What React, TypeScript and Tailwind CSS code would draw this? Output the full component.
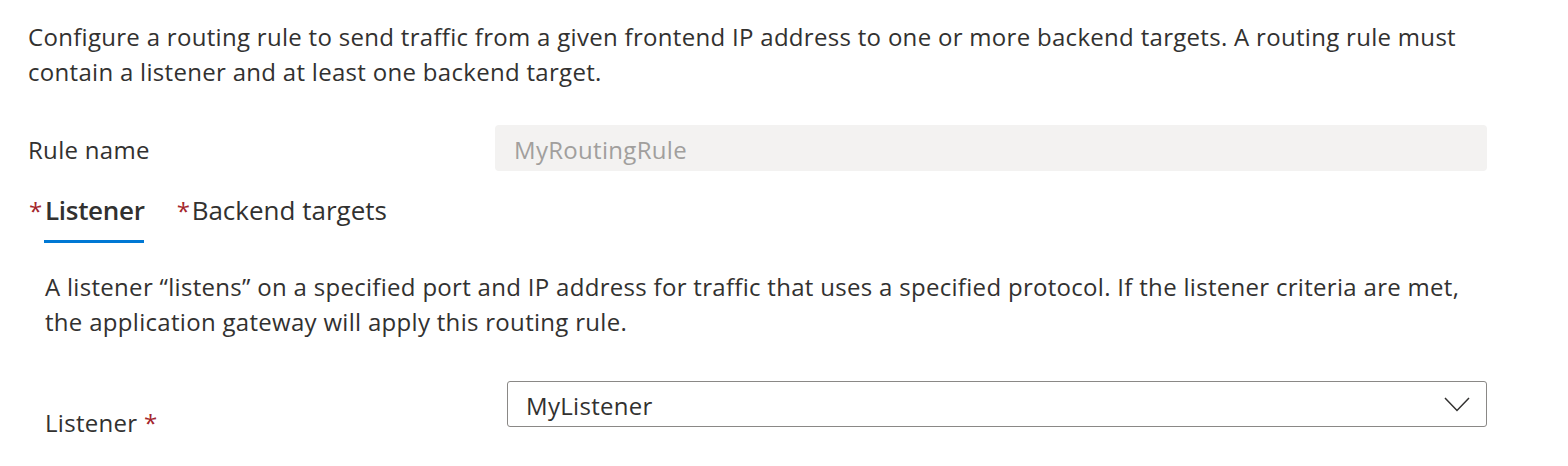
import React from "react";

export default function App() {
  return (
    <div
      className="w-[1568px] h-[466px] bg-white text-[#323130] overflow-hidden"
      style={{ fontFamily: '"Open Sans", "Noto Sans", sans-serif' }}
    >
      <div className="pl-[28px] pt-[19px] text-[24px] leading-[35px] tracking-[0.3px]">
        <p className="w-[1450px]">
          Configure a routing rule to send traffic from a given frontend IP address to one or more backend targets. A routing rule must contain a listener and at least one backend target.
        </p>
        <div className="mt-[36px] flex items-start w-[1459px]">
          <div className="w-[467px] pt-[7px]">Rule name</div>
          <div className="flex-1 h-[46px] rounded-[4px] bg-[#f3f2f1] flex items-center pl-[19px] pt-[3px] text-[#a19f9d]">
            MyRoutingRule
          </div>
        </div>
        <div className="mt-[22px] flex items-start text-[26px] tracking-[0px]">
          <div className="flex flex-col">
            <div className="flex items-start">
              <span className="text-[#a4262c] text-[24px] w-[17px] pl-[1px]">*</span>
              <span className="font-semibold tracking-[-0.3px]">Listener</span>
            </div>
            <div className="ml-[16px] mt-[12px] h-[3px] w-[100px] bg-[#0078d4]" />
          </div>
          <div className="ml-[32px] flex items-start">
            <span className="text-[#a4262c] text-[24px] w-[15px]">*</span>
            <span>Backend targets</span>
          </div>
        </div>
        <div className="pl-[17px] w-[1459px]">
          <p className="mt-[26px] w-[1435px]">
            A listener “listens” on a specified port and IP address for traffic that uses a specified protocol. If the listener criteria are met, the application gateway will apply this routing rule.
          </p>
          <div className="mt-[42px] flex items-start">
            <div className="w-[462px] pt-[24px]">
              Listener <span className="text-[#a4262c]">*</span>
            </div>
            <div className="flex-1 h-[46px] rounded-[3px] border border-[#8a8886] flex items-center justify-between pl-[18px] pr-[16px]">
              <span className="pt-[2px]">MyListener</span>
              <svg width="26" height="15" viewBox="0 0 26 15" fill="none">
                <path d="M1 1 L13 13.5 L25 1" stroke="#323130" strokeWidth="1.5" />
              </svg>
            </div>
          </div>
        </div>
      </div>
    </div>
  );
}
